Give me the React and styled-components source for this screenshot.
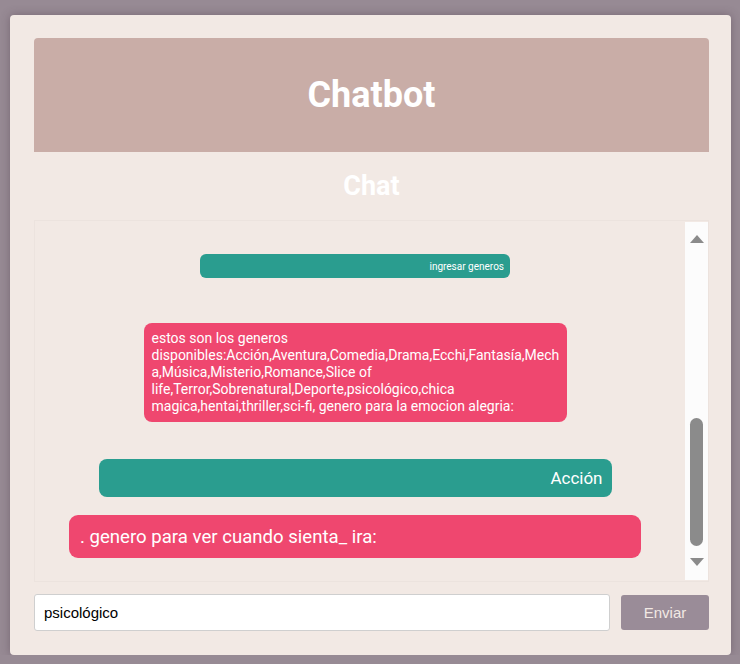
import React from "react";
import styled, { createGlobalStyle } from "styled-components";

const Global = createGlobalStyle`
  html, body {
    margin: 0;
    padding: 0;
    background: #978a94;
    font-family: Roboto, "Liberation Sans", sans-serif;
  }
  * { box-sizing: border-box; }
`;

const Card = styled.div`
  width: 721px;
  height: 640px;
  margin: 15px 0 0 10px;
  padding: 23px 22px 24px 24px;
  background: #f2e9e4;
  border-radius: 4px;
  box-shadow: 0 0 10px rgba(60, 40, 55, 0.35);
  display: flex;
  flex-direction: column;
`;

const Header = styled.div`
  height: 114px;
  background: #c9ada7;
  border-radius: 4px 4px 0 0;
  display: flex;
  align-items: center;
  justify-content: center;
`;

const Title = styled.h1`
  margin: 0;
  color: #fff;
  font-size: 36px;
  font-weight: 700;
`;

const ChatTitle = styled.h2`
  margin: 0;
  height: 68px;
  display: flex;
  align-items: center;
  justify-content: center;
  color: #fff;
  font-size: 27px;
  font-weight: 700;
`;

const ChatWindow = styled.div`
  height: 362px;
  border: 1px solid #ece3de;
  display: flex;
`;

const Messages = styled.div`
  flex: 1;
  overflow: hidden;
  display: flex;
  flex-direction: column;
  align-items: center;
  padding: 33px 10px 0 0;
`;

const Bubble = styled.div`
  width: ${(p) => p.$w}px;
  min-height: ${(p) => p.$h}px;
  margin-top: ${(p) => p.$top}px;
  background: ${(p) => (p.$bot ? "#ef476f" : "#2a9d8f")};
  color: #fff;
  font-size: ${(p) => p.$size}px;
  line-height: ${(p) => p.$lh}px;
  text-align: ${(p) => (p.$bot ? "left" : "right")};
  padding: ${(p) => p.$pad};
  border-radius: ${(p) => p.$r}px;
  display: flex;
  align-items: center;
`;

const BubbleText = styled.span`
  flex: 1;
  min-width: 0;
  overflow-wrap: break-word;
`;

const Track = styled.div`
  width: 23px;
  margin: 1px 0;
  background: #fcfcfc;
  display: flex;
  flex-direction: column;
  align-items: center;
  padding: 13px 0 14px;
`;

const Arrow = styled.div`
  width: 0;
  height: 0;
  border-left: 7.5px solid transparent;
  border-right: 7.5px solid transparent;
  ${(p) => (p.$down ? "border-top" : "border-bottom")}: 8px solid #8b8b8b;
`;

const Thumb = styled.div`
  width: 13px;
  height: 128px;
  margin-top: auto;
  margin-bottom: 12px;
  background: #8b8b8b;
  border-radius: 7px;
`;

const InputRow = styled.form`
  margin-top: 12px;
  display: flex;
  align-items: center;
  gap: 11px;
`;

const Input = styled.input`
  flex: 1;
  height: 37px;
  border: 1px solid #cfcfcf;
  border-radius: 3px;
  padding: 0 9px;
  font-family: "Liberation Sans", Arial, sans-serif;
  font-size: 15px;
  color: #000;
  background: #fff;
  outline: none;
`;

const SendButton = styled.button`
  width: 88px;
  height: 35px;
  border: none;
  border-radius: 3px;
  background: #9a8c98;
  color: #f2e9e4;
  font-family: "Liberation Sans", Arial, sans-serif;
  font-size: 15px;
  cursor: pointer;
`;

const messages = [
  { bot: false, text: "ingresar generos", w: 310, h: 24, top: 0, size: 10, lh: 13, pad: "0 6px", r: 6 },
  {
    bot: true,
    text:
      "estos son los generos disponibles:Acción,Aventura,Comedia,Drama,Ecchi,Fantasía,Mecha,Música,Misterio,Romance,Slice of life,Terror,Sobrenatural,Deporte,psicológico,chica magica,hentai,thriller,sci-fi, genero para la emocion alegria:",
    w: 423, h: 98, top: 45, size: 14, lh: 17, pad: "7px 5px 7px 8px", r: 8,
  },
  { bot: false, text: "Acción", w: 513, h: 38, top: 37, size: 17, lh: 20, pad: "0 9px", r: 8 },
  { bot: true, text: ". genero para ver cuando sienta_ ira:", w: 572, h: 43, top: 18, size: 18.6, lh: 22, pad: "0 11px", r: 9 },
];

export default function App() {
  return (
    <>
      <Global />
      <Card>
        <Header>
          <Title>Chatbot</Title>
        </Header>
        <ChatTitle>Chat</ChatTitle>
        <ChatWindow>
          <Messages>
            {messages.map((m, i) => (
              <Bubble
                key={i}
                $bot={m.bot}
                $w={m.w}
                $h={m.h}
                $top={m.top}
                $size={m.size}
                $lh={m.lh}
                $pad={m.pad}
                $r={m.r}
              >
                <BubbleText>{m.text}</BubbleText>
              </Bubble>
            ))}
          </Messages>
          <Track>
            <Arrow />
            <Thumb />
            <Arrow $down />
          </Track>
        </ChatWindow>
        <InputRow onSubmit={(e) => e.preventDefault()}>
          <Input defaultValue="psicológico" />
          <SendButton type="submit">Enviar</SendButton>
        </InputRow>
      </Card>
    </>
  );
}
